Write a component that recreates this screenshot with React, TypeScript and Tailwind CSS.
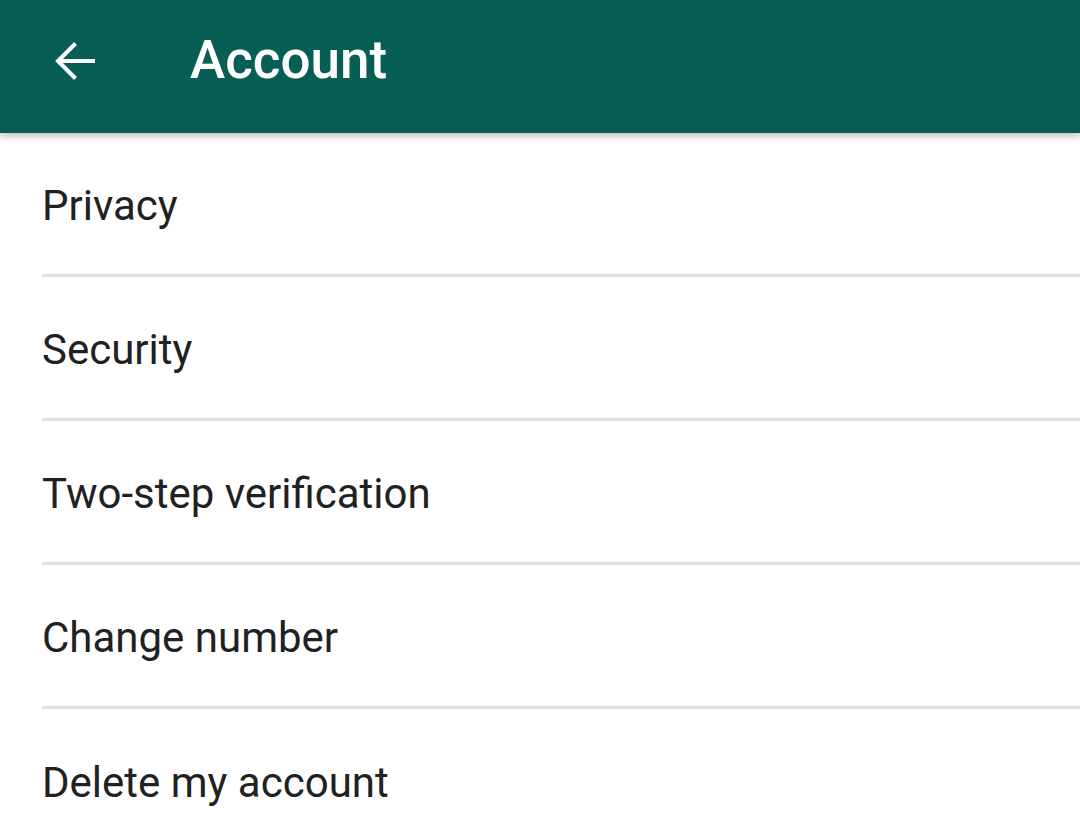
// Account settings screen
const items = ["Privacy", "Security", "Two-step verification", "Change number", "Delete my account"];

function BackArrow() {
  return (
    <svg className="w-[42px] h-[42px] shrink-0" viewBox="0 0 42 42" fill="none" stroke="white" strokeWidth={4}>
      <path d="M42 21H5" />
      <path d="M22.5 3.5L5 21l17.5 17.5" />
    </svg>
  );
}

export default function App() {
  return (
    <div className="w-[1080px] h-[820px] overflow-hidden bg-white font-['Roboto','Liberation_Sans',sans-serif]">
      {/* App bar */}
      <header className="relative z-10 h-[133px] bg-[#075e54] flex items-center pl-[53px] pb-[12px] shadow-[0_3px_8px_rgba(0,0,0,0.28)]">
        <BackArrow />
        <h1 className="ml-[95px] text-white text-[53px] font-medium leading-none">Account</h1>
      </header>

      {/* Rows */}
      <ul>
        {items.map((label, idx) => (
          <li
            key={label}
            className={`ml-[42px] h-[144px] pt-[4px] flex items-center text-[42px] text-[#212121] leading-none ${
              idx < items.length - 1 ? "border-b-[3px] border-[#e0e0e0]" : ""
            }`}
          >
            {label}
          </li>
        ))}
      </ul>
    </div>
  );
}
